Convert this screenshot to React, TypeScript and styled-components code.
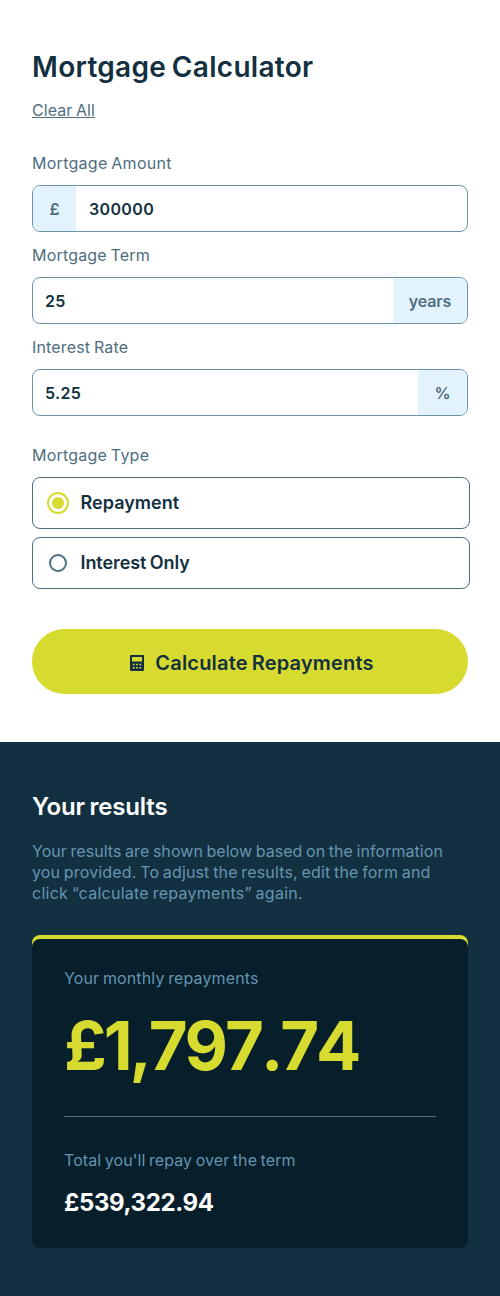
import React, { useState } from "react";
import styled, { createGlobalStyle } from "styled-components";

const Global = createGlobalStyle`
  *, *::before, *::after { box-sizing: border-box; word-spacing: -0.06em; }
  body {
    margin: 0;
    background: #ffffff;
    color: #133041;
    font-family: Inter, "Open Sans", sans-serif;
    font-size: 16px;
  }
  button, input { font: inherit; color: inherit; }
`;

const Page = styled.main`
  display: flex;
  flex-direction: column;
  min-height: 1296px;
`;

const Form = styled.form`
  height: 742px;
  padding: 48px 32px;
  display: flex;
  flex-direction: column;
  align-items: stretch;
`;

const Title = styled.h1`
  margin: 0;
  font-size: 28px;
  line-height: 38px;
  font-weight: 600;
  letter-spacing: 0.3px;
`;

const ClearButton = styled.button`
  align-self: flex-start;
  margin: 14px 0 0;
  padding: 0;
  border: 0;
  background: none;
  color: #4e6e7e;
  font-size: 16px;
  line-height: 20px;
  letter-spacing: 0.05px;
  text-decoration: underline;
`;

const Label = styled.label<{ $top: number; $spacing?: number }>`
  display: block;
  margin-top: ${(p) => p.$top}px;
  color: #4e6e7e;
  font-size: 16px;
  line-height: 20px;
  letter-spacing: ${(p) => p.$spacing ?? 0}px;
`;

const Field = styled.div`
  display: flex;
  height: 47px;
  margin-top: 12px;
  border: 1px solid #6b94a8;
  border-radius: 8px;
  overflow: hidden;
`;

const Unit = styled.span<{ $width: number }>`
  flex: 0 0 ${(p) => p.$width}px;
  display: flex;
  align-items: center;
  justify-content: center;
  background: #e3f3fd;
  color: #4e6e7e;
  font-weight: 600;
  letter-spacing: -0.15px;
`;

const Input = styled.input<{ $left?: number }>`
  flex: 1;
  min-width: 0;
  padding: 0 12px 0 ${(p) => p.$left ?? 12}px;
  border: 0;
  outline: 0;
  background: transparent;
  font-weight: 600;
  letter-spacing: 0.35px;
`;

const Options = styled.div`
  display: flex;
  flex-direction: column;
  gap: 8px;
  width: 438px;
  margin-top: 12px;
`;

const Option = styled.label`
  display: flex;
  align-items: center;
  height: 52px;
  padding-left: 14px;
  border: 1px solid #4e6e7e;
  border-radius: 8px;
  cursor: pointer;
`;

const OptionText = styled.span<{ $spacing: number }>`
  padding-bottom: 2px;
  font-size: 18px;
  font-weight: 600;
  letter-spacing: ${(p) => p.$spacing}px;
`;

const Radio = styled.input`
  appearance: none;
  display: grid;
  place-items: center;
  width: 18px;
  height: 18px;
  margin: 0 13.5px 0 2px;
  border: 2px solid #4e6e7e;
  border-radius: 50%;
  &:checked {
    width: 22px;
    height: 22px;
    margin: 0 11.5px 0 0;
    border-color: #d7da2f;
  }
  &:checked::before {
    content: "";
    width: 12px;
    height: 12px;
    border-radius: 50%;
    background: #d7da2f;
  }
`;

const Submit = styled.button`
  display: flex;
  align-items: center;
  justify-content: center;
  gap: 11px;
  height: 65px;
  margin-top: 40px;
  padding: 2px 0 0 4px;
  border: 0;
  border-radius: 33px;
  background: #d7da2f;
  font-size: 20px;
  font-weight: 600;
  letter-spacing: 0.18px;
`;

const Results = styled.section`
  flex: 1;
  padding: 48px 32px;
  background: #133041;
  color: #ffffff;
`;

const ResultsTitle = styled.h2`
  margin: 0;
  font-size: 24px;
  line-height: 34px;
  font-weight: 600;
  letter-spacing: -0.16px;
`;

const Intro = styled.p`
  margin: 17px 0 0;
  color: #6595b0;
  line-height: 21px;
  white-space: nowrap;
`;

const Line = styled.span<{ $spacing: number }>`
  display: block;
  letter-spacing: ${(p) => p.$spacing}px;
`;

const Card = styled.div`
  height: 313px;
  margin-top: 31px;
  padding-top: 4px;
  border-radius: 8px;
  background: linear-gradient(#d7da2f, #d7da2f) top / 100% 20px no-repeat;
`;

const CardBody = styled.div`
  height: 309px;
  padding: 29px 32px;
  border-radius: 8px;
  background: #071e2b;
`;

const Caption = styled.p<{ $spacing: number }>`
  margin: 0;
  color: #6595b0;
  line-height: 20px;
  letter-spacing: ${(p) => p.$spacing}px;
`;

const Monthly = styled.p`
  margin: 16px 0 0;
  color: #d7da2f;
  font-size: 67px;
  line-height: 84px;
  font-weight: 700;
  font-kerning: none;
  letter-spacing: -3.1px;
`;

const Divider = styled.hr`
  height: 1px;
  margin: 28px 0 33px;
  border: 0;
  background: #4e6e7e;
`;

const Total = styled.p`
  margin: 16px 0 0;
  font-size: 24px;
  line-height: 33px;
  font-weight: 700;
  letter-spacing: -0.38px;
`;

const CalculatorIcon = () => (
  <svg width="14" height="16" viewBox="0 0 14 16" aria-hidden="true">
    <path
      fill="#133041"
      fillRule="evenodd"
      d="M1 0h12a1 1 0 0 1 1 1v14a1 1 0 0 1-1 1H1a1 1 0 0 1-1-1V1a1 1 0 0 1 1-1ZM2 2v4.5h10V2ZM2.8 8.7v1.6h1.8V8.7ZM6.1 8.7v1.6h1.8V8.7ZM9.4 8.7v1.6h1.8V8.7ZM2.8 12v1.6h1.8V12ZM6.1 12v1.6h1.8V12ZM9.4 12v1.6h1.8V12Z"
    />
  </svg>
);

export default function App() {
  const [amount, setAmount] = useState("300000");
  const [term, setTerm] = useState("25");
  const [rate, setRate] = useState("5.25");
  const [kind, setKind] = useState("repayment");

  const clear = () => {
    setAmount("");
    setTerm("");
    setRate("");
  };

  return (
    <Page>
      <Global />
      <Form onSubmit={(e) => e.preventDefault()}>
        <Title>Mortgage Calculator</Title>
        <ClearButton type="button" onClick={clear}>Clear All</ClearButton>

        <Label $top={33} $spacing={0.27} htmlFor="amount">Mortgage Amount</Label>
        <Field>
          <Unit $width={43}>£</Unit>
          <Input $left={13} id="amount" value={amount} onChange={(e) => setAmount(e.target.value)} />
        </Field>

        <Label $top={13} $spacing={0.19} htmlFor="term">Mortgage Term</Label>
        <Field>
          <Input id="term" value={term} onChange={(e) => setTerm(e.target.value)} />
          <Unit $width={74}>years</Unit>
        </Field>

        <Label $top={13} $spacing={0.16} htmlFor="rate">Interest Rate</Label>
        <Field>
          <Input id="rate" value={rate} onChange={(e) => setRate(e.target.value)} />
          <Unit $width={49}>%</Unit>
        </Field>

        <Label as="div" $top={29} $spacing={0.22}>Mortgage Type</Label>
        <Options>
          <Option>
            <Radio type="radio" name="kind" checked={kind === "repayment"} onChange={() => setKind("repayment")} />
            <OptionText $spacing={0.03}>Repayment</OptionText>
          </Option>
          <Option>
            <Radio type="radio" name="kind" checked={kind === "interest"} onChange={() => setKind("interest")} />
            <OptionText $spacing={-0.07}>Interest Only</OptionText>
          </Option>
        </Options>

        <Submit type="submit">
          <CalculatorIcon />
          <span>Calculate Repayments</span>
        </Submit>
      </Form>

      <Results>
        <ResultsTitle>Your results</ResultsTitle>
        <Intro>
          <Line $spacing={0.05}>Your results are shown below based on the information </Line>
          <Line $spacing={0.15}>you provided. To adjust the results, edit the form and </Line>
          <Line $spacing={0.26}>click “calculate repayments” again.</Line>
        </Intro>
        <Card>
          <CardBody>
            <Caption $spacing={0.13}>Your monthly repayments</Caption>
            <Monthly>£1,797.74</Monthly>
            <Divider />
            <Caption $spacing={0.06}>Total you'll repay over the term</Caption>
            <Total>£539,322.94</Total>
          </CardBody>
        </Card>
      </Results>
    </Page>
  );
}
